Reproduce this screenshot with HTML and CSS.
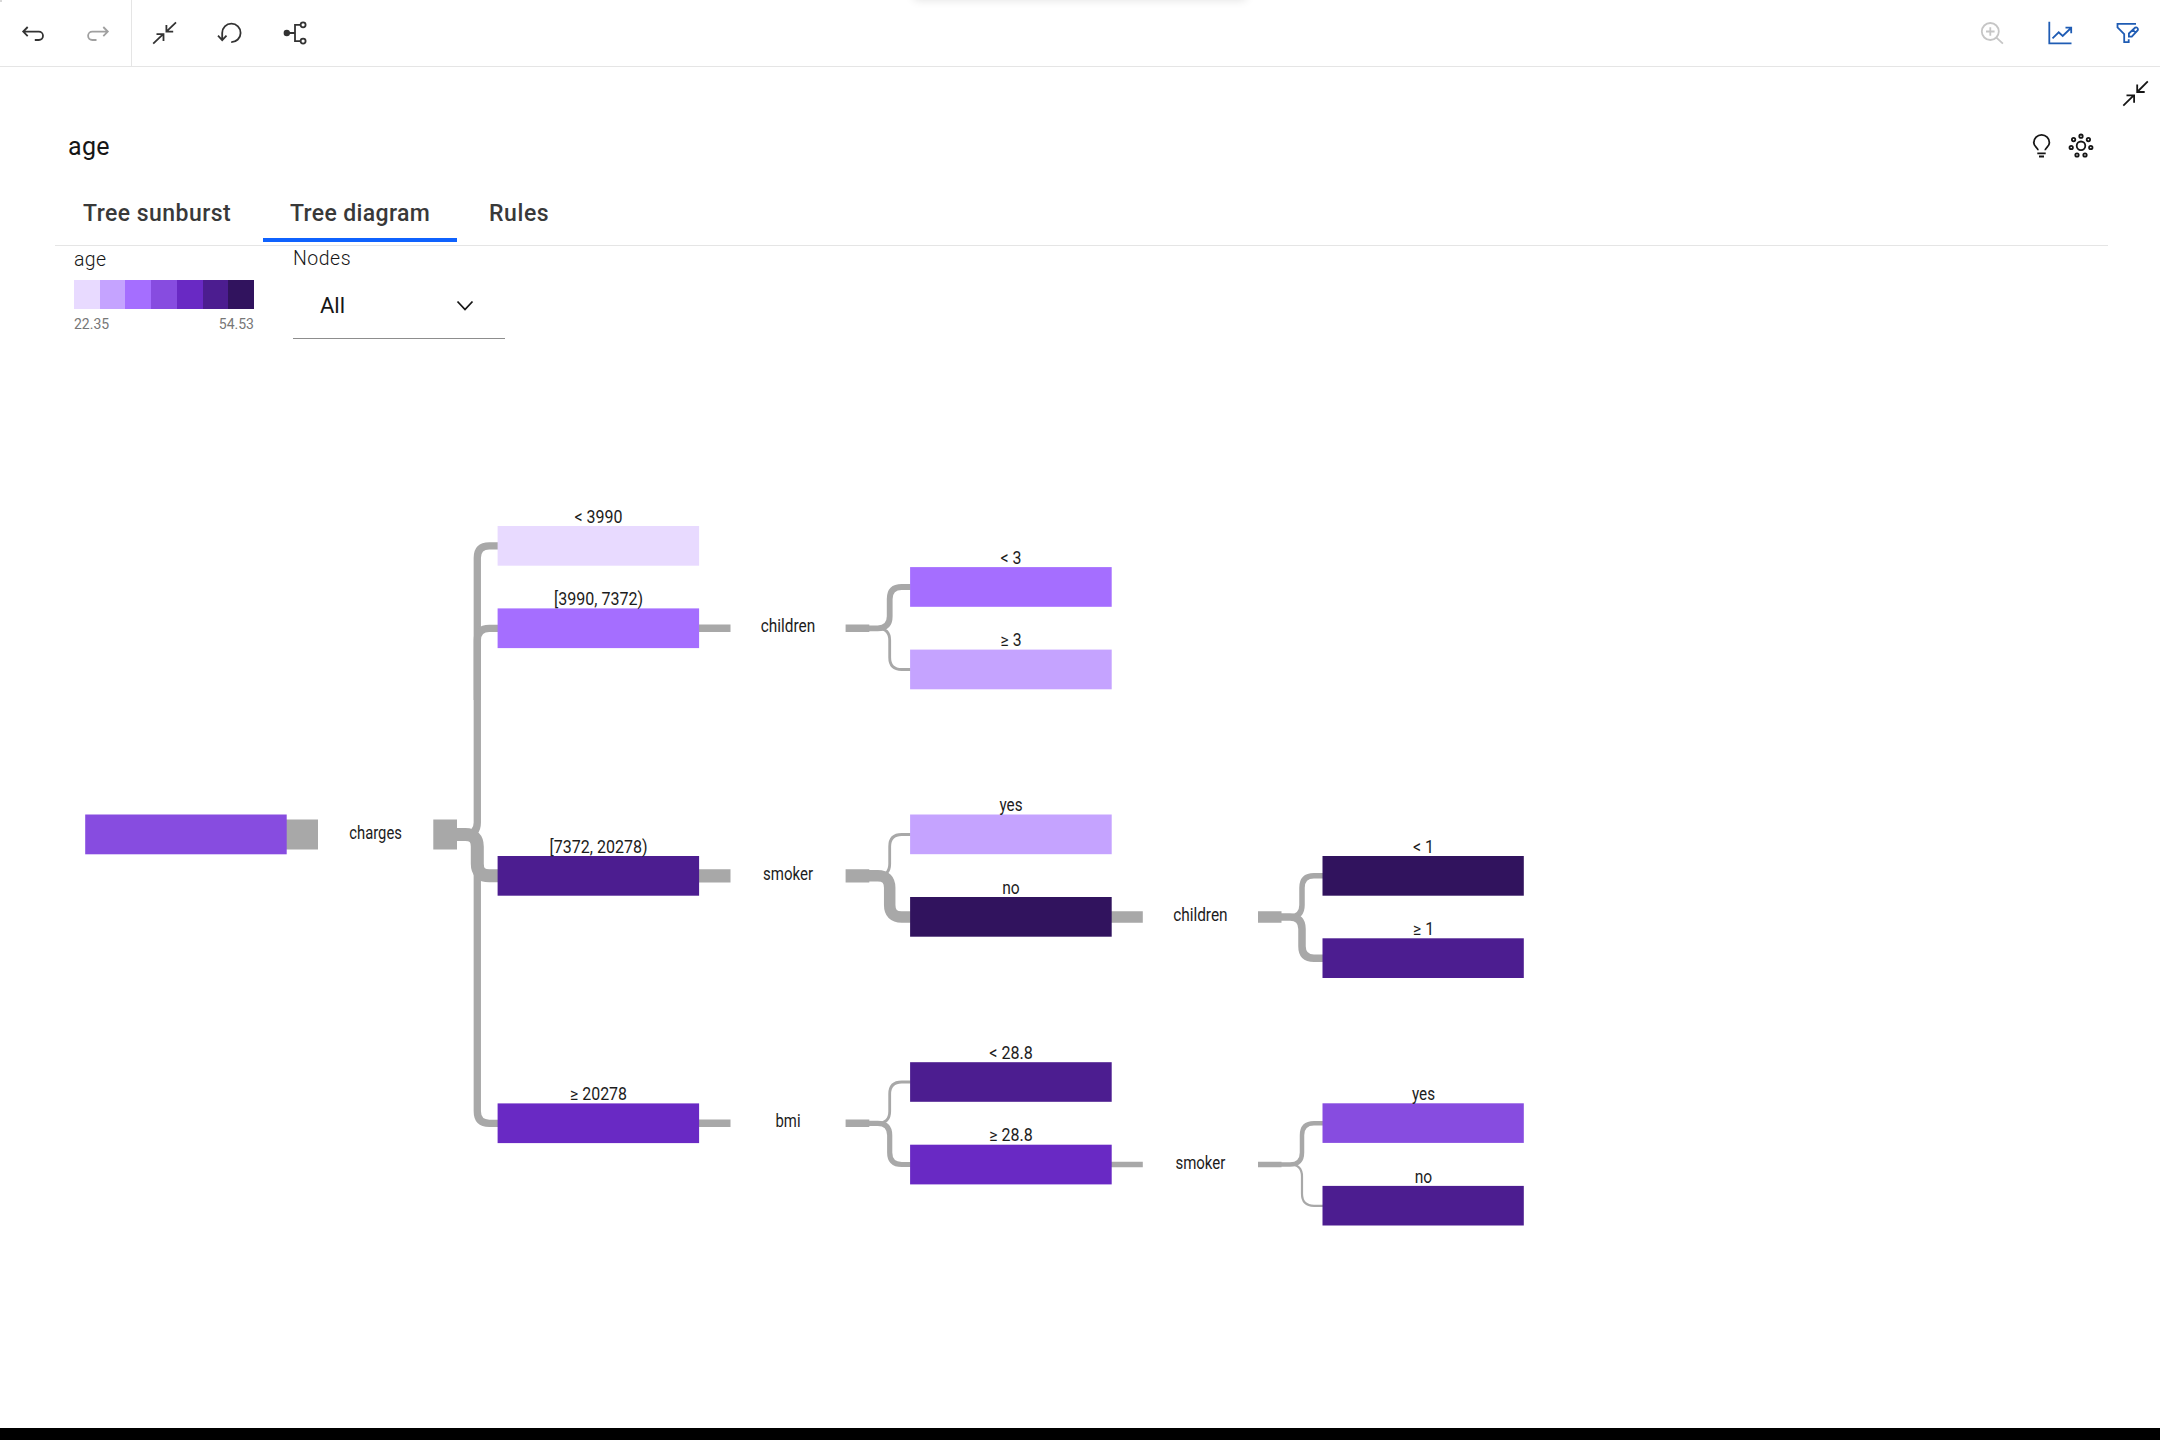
FILE: index.html
```html
<!DOCTYPE html>
<html lang="en">
<head>
<meta charset="utf-8">
<title>age - Tree diagram</title>
<link rel="stylesheet" href="styles.css">
</head>
<body>
<div class="app">
  <header class="toolbar">
    <div class="toolbar-group history">
      <button class="tool" aria-label="Undo"><svg class="icon" viewBox="17 17 32 32"><path d="M27.700 27L23.200 31.600l4.500 4.600M23.500 31.600H38.800a4.200 4.200 0 0 1 0 8.400H34.800"/></svg></button>
      <button class="tool disabled" aria-label="Redo"><svg class="icon" viewBox="82 17 32 32"><path d="M103.300 27l4.500 4.600-4.500 4.600M107.500 31.600H92.300a4.200 4.200 0 0 0 0 8.400h4.200"/></svg></button>
    </div>
    <div class="toolbar-group">
      <button class="tool" aria-label="Collapse"><svg class="icon" viewBox="148 17 32 32"><path d="M176 22.300l-9.600 9.300M166.400 25v6.700h6.800M153.200 43.600l10-9.400M156.500 34.200h7v6.800"/></svg></button>
      <button class="tool" aria-label="Reset"><svg class="icon" viewBox="214.500 17 32 32"><path d="M231.700 42.100A9.200 9.200 0 1 0 222.700 33v7M218.500 35.700l4.200 4.400 4.300-4.400"/></svg></button>
      <button class="tool" aria-label="Tree"><svg class="icon" viewBox="280 17 32 32"><circle class="solid" cx="286.800" cy="33" r="3.200"/><path d="M287 33h8M300.600 24.800H295v16.300h5.600"/><circle cx="303.100" cy="24.800" r="2.500"/><circle cx="303.100" cy="41.100" r="2.500"/></svg></button>
    </div>
    <div class="toolbar-group end">
      <button class="tool muted" aria-label="Zoom in"><svg class="icon" viewBox="1976 17 32 32"><circle cx="1990.300" cy="31.500" r="8.500"/><path d="M1996.400 37.600l6.500 6M1986 31.500h8.600M1990.300 27.200v8.600"/></svg></button>
      <button class="tool blue" aria-label="Chart"><svg class="icon" viewBox="2044 17 32 32"><path d="M2049.300 21.800v21.500h22.200M2052.500 38.300l6.200-6 4 3.700 8.300-8M2065.500 27.700h5.700v5.600"/></svg></button>
      <button class="tool blue" aria-label="Edit filter"><svg class="icon" viewBox="2112 17 32 32"><path d="M2136 23.800h-18.500v3.500l6.700 6.900v7.900h4.500v-2.800M2128.900 36.700v-3.200l6.300-5.900q1.200-.7 2.200.4t.4 2.200l-6 6.500zM2132.800 29.900l2.700 2.700"/></svg></button>
    </div>
  </header>

  <main class="panel">
    <div class="panel-close"><svg class="icon dark" viewBox="2119 77 32 32"><path d="M2147.800 81.300L2137.200 92M2137.200 84.500V92h7.500M2123.300 105.600L2134 95.200M2126.500 95.400h7.600v7.300"/></svg></div>
    <div class="panel-head">
      <h1 class="title">age</h1>
      <div class="panel-actions">
        <svg class="icon dark" viewBox="2025 129 32 32"><path d="M2038 150.300c0-2.600-4.200-3.600-4.200-7.600a7.800 7.800 0 0 1 15.600 0c0 4-4.200 5-4.200 7.600M2037.300 153.300h8.400M2039 156.500h5"/></svg>
        <svg class="icon dark" viewBox="2065 129 32 32"><circle cx="2081" cy="145.800" r="4.300"/><circle cx="2081" cy="136.200" r="1.700"/><circle cx="2088.400" cy="139.600" r="1.700"/><circle cx="2090.800" cy="147.500" r="1.700"/><circle cx="2085" cy="155" r="1.700"/><circle cx="2077" cy="155" r="1.700"/><circle cx="2071.200" cy="147.500" r="1.700"/><circle cx="2073.600" cy="139.600" r="1.700"/></svg>
      </div>
    </div>
    <nav class="tabs">
      <a class="tab sunburst">Tree sunburst</a>
      <a class="tab diagram active">Tree diagram</a>
      <a class="tab rules">Rules</a>
    </nav>
    <div class="controls">
      <div class="legend">
        <div class="legend-title">age</div>
        <div class="scale"><i class="c1"></i><i class="c2"></i><i class="c3"></i><i class="c4"></i><i class="c5"></i><i class="c6"></i><i class="c7"></i></div>
        <div class="legend-range"><span>22.35</span><span>54.53</span></div>
      </div>
      <div class="nodes">
        <div class="nodes-label">Nodes</div>
        <div class="select"><span>All</span><svg class="chevron" viewBox="0 0 20 14"><path d="M2.500 2.500L10 10.500l7.500-8"/></svg></div>
      </div>
    </div>

    <svg class="tree" viewBox="0 360 2160 1068">
      <g class="links">
        <path stroke-width="7.300" d="M457 834.500h8.300q12 0 12-12V557.800q0-12 12-12h9"/>
        <path stroke-width="7.300" d="M477.300 700V640.300q0-12 12-12h9"/>
        <path stroke-width="7.300" d="M457 834.500h8.300q12 0 12 12V1111.300q0 12 12 12h9"/>
        <path stroke-width="13" d="M457 834.500h8.300q12 0 12 12V863.800q0 12 12 12h9"/>
        <path stroke-width="5.800" d="M869 628.300h8.700q12 0 12-12V599q0-12 12-12h9"/>
        <path stroke-width="2.800" d="M869 628.300h8.700q12 0 12 12V657.500q0 12 12 12h9"/>
        <path stroke-width="2.800" d="M869 875.800h8.700q12 0 12-12V846.500q0-12 12-12h9"/>
        <path stroke-width="11.500" d="M869 875.800h8.700q12 0 12 12V905q0 12 12 12h9"/>
        <path stroke-width="2.800" d="M869 1123.300h8.700q12 0 12-12V1094q0-12 12-12h9"/>
        <path stroke-width="5.200" d="M869 1123.300h8.700q12 0 12 12V1152.500q0 12 12 12h9"/>
        <path stroke-width="5.500" d="M1281 917h9q12 0 12-12V887.800q0-12 12-12h9"/>
        <path stroke-width="7.500" d="M1281 917h9q12 0 12 12V946.300q0 12 12 12h9"/>
        <path stroke-width="4.500" d="M1281 1164.500h9q12 0 12-12V1135.300q0-12 12-12h9"/>
        <path stroke-width="2.200" d="M1281 1164.500h9q12 0 12 12V1193.800q0 12 12 12h9"/>
      </g>
      <g class="stubs">
        <path stroke-width="30" d="M286 834.500h32M433.300 834.500h23.700"/>
        <path stroke-width="7.500" d="M699 628.300h31.500M845.600 628.300H869.300"/>
        <path stroke-width="13.200" d="M699 875.800h31.500M845.600 875.800H869.300"/>
        <path stroke-width="7.500" d="M699 1123.300h31.500M845.600 1123.300H869.300"/>
        <path stroke-width="11.500" d="M1111 917h31.800M1258 917h23.500"/>
        <path stroke-width="5.300" d="M1111 1164.500h31.800M1258 1164.500h23.500"/>
      </g>
      <g class="bars">
        <rect class="c4" x="85.200" y="814.500" width="201.500" height="39.800"/>
        <rect class="c1" x="497.600" y="526" width="201.500" height="39.700"/>
        <rect class="c3" x="497.600" y="608.400" width="201.500" height="39.700"/>
        <rect class="c6" x="497.600" y="856" width="201.500" height="39.700"/>
        <rect class="c5" x="497.600" y="1103.400" width="201.500" height="39.700"/>
        <rect class="c3" x="910.100" y="567.100" width="201.600" height="39.700"/>
        <rect class="c2" x="910.100" y="649.600" width="201.600" height="39.700"/>
        <rect class="c2" x="910.100" y="814.500" width="201.600" height="39.700"/>
        <rect class="c7" x="910.100" y="897" width="201.600" height="39.700"/>
        <rect class="c6" x="910.100" y="1062.200" width="201.600" height="39.600"/>
        <rect class="c5" x="910.100" y="1144.700" width="201.600" height="39.700"/>
        <rect class="c7" x="1322.500" y="856" width="201.300" height="39.700"/>
        <rect class="c6" x="1322.500" y="938.300" width="201.300" height="39.700"/>
        <rect class="c4" x="1322.500" y="1103.300" width="201.300" height="39.600"/>
        <rect class="c6" x="1322.500" y="1185.900" width="201.300" height="39.600"/>
      </g>
      <g class="labels">
        <text x="375.600" y="839" textLength="52.500" lengthAdjust="spacingAndGlyphs">charges</text>
        <text x="788" y="632" textLength="54.500" lengthAdjust="spacingAndGlyphs">children</text>
        <text x="788" y="880" textLength="50" lengthAdjust="spacingAndGlyphs">smoker</text>
        <text x="788" y="1127" textLength="25" lengthAdjust="spacingAndGlyphs">bmi</text>
        <text x="1200.400" y="921" textLength="54.500" lengthAdjust="spacingAndGlyphs">children</text>
        <text x="1200.400" y="1169" textLength="50" lengthAdjust="spacingAndGlyphs">smoker</text>
        <text x="598.500" y="523" textLength="48" lengthAdjust="spacingAndGlyphs">&lt; 3990</text>
        <text x="598.500" y="605" textLength="89" lengthAdjust="spacingAndGlyphs">[3990, 7372)</text>
        <text x="598.500" y="853" textLength="98" lengthAdjust="spacingAndGlyphs">[7372, 20278)</text>
        <text x="598.500" y="1100" textLength="57" lengthAdjust="spacingAndGlyphs">≥ 20278</text>
        <text x="1011" y="564" textLength="21" lengthAdjust="spacingAndGlyphs">&lt; 3</text>
        <text x="1011" y="646" textLength="21" lengthAdjust="spacingAndGlyphs">≥ 3</text>
        <text x="1011" y="811" textLength="23" lengthAdjust="spacingAndGlyphs">yes</text>
        <text x="1011" y="894" textLength="17.500" lengthAdjust="spacingAndGlyphs">no</text>
        <text x="1011" y="1059" textLength="43.500" lengthAdjust="spacingAndGlyphs">&lt; 28.8</text>
        <text x="1011" y="1141" textLength="43.500" lengthAdjust="spacingAndGlyphs">≥ 28.8</text>
        <text x="1423.500" y="853" textLength="21" lengthAdjust="spacingAndGlyphs">&lt; 1</text>
        <text x="1423.500" y="935" textLength="21" lengthAdjust="spacingAndGlyphs">≥ 1</text>
        <text x="1423.500" y="1100" textLength="23" lengthAdjust="spacingAndGlyphs">yes</text>
        <text x="1423.500" y="1183" textLength="17.500" lengthAdjust="spacingAndGlyphs">no</text>
      </g>
    </svg>
  </main>
  <footer class="bottom-bar"></footer>
</div>
</body>
</html>
```
FILE: styles.css
```css
* { box-sizing: border-box; }

body {
  margin: 0;
  background: #fff;
  color: #161616;
  font-family: Roboto, "Noto Sans", sans-serif;
  overflow: hidden;
}

.app {
  position: relative;
  display: flex;
  flex-direction: column;
  width: 2160px;
  height: 1440px;
  overflow: hidden;
}

/* edge of the hidden flyout above the toolbar */
.app::before {
  content: "";
  position: absolute;
  left: 914px;
  top: -20px;
  width: 332px;
  height: 18px;
  box-shadow: 0 2px 10px rgba(0, 0, 0, .12);
}

.app::after {
  content: "";
  position: absolute;
  left: 0;
  top: 0;
  width: 2px;
  height: 2px;
  background: #d8d8d8;
}

.toolbar {
  display: flex;
  height: 67px;
  border-bottom: 1px solid #e5e5e5;
}

.toolbar-group { display: flex; }

.history {
  width: 132px;
  border-right: 1px solid #e5e5e5;
}

.end { margin-left: auto; }

.tool {
  display: flex;
  justify-content: center;
  width: 65px;
  padding: 17px 0 0;
  border: 0;
  background: none;
  color: #333;
}

.history .tool:first-child { width: 66px; }
.history .tool:last-child { width: 65px; margin-left: -1px; }
.toolbar-group:nth-child(2) .tool:first-child { width: 64px; }
.toolbar-group:nth-child(2) .tool:nth-child(2) { width: 68px; }
.toolbar-group:nth-child(2) .tool:nth-child(3) { width: 64px; }
.end .tool { width: 68px; }
.end .tool:last-child { margin-right: -2px; }

.tool.disabled { color: #a0a0a0; }
.tool.muted { color: #c6c6c6; }
.tool.blue { color: #1f5cb4; }
.dark { color: #161616; }

.icon {
  display: block;
  width: 32px;
  height: 32px;
  fill: none;
  stroke: currentColor;
  stroke-width: 1.8;
}

.solid { fill: currentColor; stroke: none; }

.panel {
  display: flex;
  flex-direction: column;
  flex: 1;
}

.panel-close {
  display: flex;
  justify-content: flex-end;
  padding: 10px 9px 0;
}

.panel-head {
  display: flex;
  justify-content: space-between;
  height: 81px;
  padding: 20px 63px 0 68px;
}

.panel-actions { display: flex; gap: 8px; }

.title {
  margin: 2px 0 0;
  font-size: 25px;
  line-height: 32px;
  font-weight: 400;
  letter-spacing: .3px;
}

.tabs {
  display: flex;
  height: 56px;
  margin: 0 52px 0 55px;
  border-bottom: 1px solid #e5e5e5;
}

.tab {
  height: 52px;
  padding-top: 8px;
  font-size: 23px;
  line-height: 32px;
  font-weight: 500;
  color: #393939;
  white-space: nowrap;
}

.sunburst { width: 208px; padding-left: 28px; letter-spacing: .45px; }
.diagram { width: 194px; padding-left: 27px; letter-spacing: .35px; }
.rules { padding-left: 32px; letter-spacing: .6px; }
.active { border-bottom: 4px solid #0f62fe; }

.controls {
  display: flex;
  gap: 39px;
  height: 114px;
  padding-left: 74px;
}

.legend { width: 180px; }

.legend-title {
  height: 34px;
  padding-top: 3px;
  font-size: 19.500px;
  line-height: 22px;
  font-weight: 300;
  letter-spacing: .3px;
}

.scale { display: flex; height: 29px; }
.scale i { flex: 1; }

.legend-range {
  display: flex;
  justify-content: space-between;
  padding-top: 6px;
  font-size: 14px;
  line-height: 18px;
  color: #777;
}

.nodes { width: 212px; }

.nodes-label {
  height: 29px;
  padding-top: 2px;
  font-size: 19.500px;
  line-height: 22px;
  font-weight: 300;
  letter-spacing: .5px;
}

.select {
  display: flex;
  justify-content: space-between;
  height: 64px;
  padding: 15px 29px 0 27px;
  border-bottom: 1px solid #8d8d8d;
  font-size: 22px;
  line-height: 32px;
}

.chevron {
  width: 20px;
  height: 14px;
  margin-top: 9px;
  margin-right: 1px;
  fill: none;
  stroke: #161616;
  stroke-width: 1.800;
}

.tree {
  display: block;
  width: 2160px;
  height: 1068px;
}

.links, .stubs { fill: none; stroke: #a8a8a8; }

.labels text {
  font-size: 17.500px;
  text-anchor: middle;
  fill: #1c1c1c;
}

.c1 { background: #e8daff; fill: #e8daff; }
.c2 { background: #c5a3ff; fill: #c5a3ff; }
.c3 { background: #a56eff; fill: #a56eff; }
.c4 { background: #874ce0; fill: #874ce0; }
.c5 { background: #6929c4; fill: #6929c4; }
.c6 { background: #4c1d90; fill: #4c1d90; }
.c7 { background: #31135e; fill: #31135e; }

.bottom-bar {
  flex: none;
  height: 12px;
  background: #000;
}
```
